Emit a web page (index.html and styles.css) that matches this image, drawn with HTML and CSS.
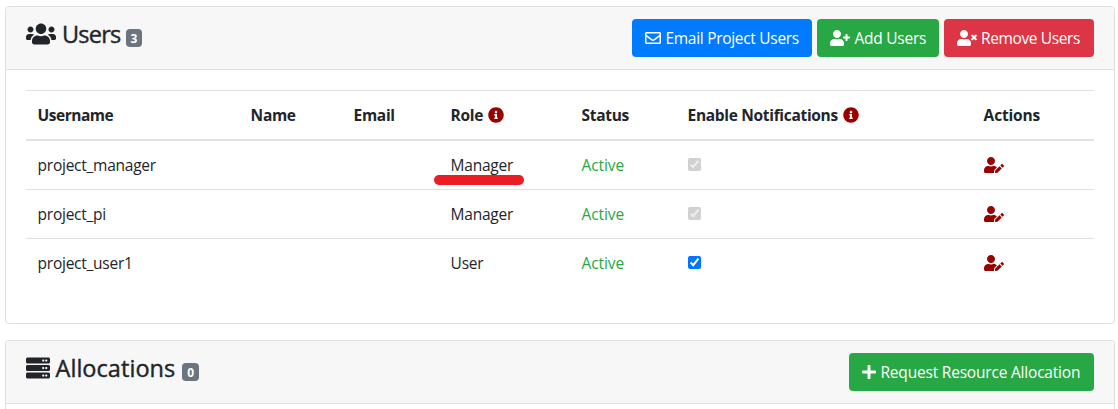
FILE: index.html
```html
<!DOCTYPE html>
<html lang="en">
<head>
<meta charset="utf-8">
<title>Project Users</title>
<link rel="stylesheet" href="styles.css">
</head>
<body>
<svg class="sprite" aria-hidden="true">
  <symbol id="users" viewBox="0 0 640 512"><path d="M96 224c35.3 0 64-28.7 64-64s-28.7-64-64-64-64 28.7-64 64 28.7 64 64 64zm448 0c35.3 0 64-28.7 64-64s-28.7-64-64-64-64 28.7-64 64 28.7 64 64 64zm32 32h-64c-17.6 0-33.5 7.1-45.1 18.6 40.3 22.1 68.9 62 75.1 109.4h66c17.7 0 32-14.3 32-32v-32c0-35.3-28.7-64-64-64zm-256 0c61.9 0 112-50.1 112-112S381.9 32 320 32 208 82.1 208 144s50.1 112 112 112zm76.8 32h-8.3c-20.8 10-43.9 16-68.5 16s-47.6-6-68.5-16h-8.3C179.6 288 128 339.6 128 403.2V432c0 26.5 21.5 48 48 48h288c26.5 0 48-21.5 48-48v-28.8c0-63.6-51.6-115.2-115.2-115.2zm-223.7-13.4C161.5 263.1 145.6 256 128 256H64c-35.3 0-64 28.7-64 64v32c0 17.7 14.3 32 32 32h65.9c6.3-47.4 34.9-87.3 75.2-109.4z"/></symbol>
  <symbol id="user-plus" viewBox="0 0 640 512"><path d="M624 208h-64v-64c0-8.800-7.200-16-16-16h-32c-8.800 0-16 7.200-16 16v64h-64c-8.800 0-16 7.200-16 16v32c0 8.800 7.200 16 16 16h64v64c0 8.800 7.200 16 16 16h32c8.800 0 16-7.200 16-16v-64h64c8.800 0 16-7.200 16-16v-32c0-8.800-7.200-16-16-16zm-400 48c70.700 0 128-57.300 128-128S294.700 0 224 0 96 57.300 96 128s57.300 128 128 128zm89.600 32h-16.700c-22.200 10.200-46.900 16-72.900 16s-50.600-5.800-72.900-16h-16.700C60.200 288 0 348.200 0 422.400V464c0 26.500 21.500 48 48 48h352c26.500 0 48-21.500 48-48v-41.600c0-74.200-60.200-134.400-134.400-134.400z"/></symbol>
  <symbol id="user-times" viewBox="0 0 640 512"><path d="M589.6 240l45.6-45.6c6.3-6.3 6.3-16.5 0-22.8l-22.8-22.8c-6.3-6.3-16.5-6.3-22.8 0L544 194.400l-45.600-45.600c-6.300-6.300-16.500-6.300-22.800 0l-22.800 22.800c-6.300 6.300-6.300 16.500 0 22.800l45.600 45.600-45.600 45.600c-6.300 6.300-6.300 16.500 0 22.800l22.800 22.800c6.300 6.300 16.500 6.300 22.800 0l45.600-45.600 45.600 45.600c6.300 6.300 16.500 6.300 22.800 0l22.800-22.800c6.300-6.300 6.300-16.500 0-22.800L589.600 240zM224 256c70.700 0 128-57.300 128-128S294.700 0 224 0 96 57.300 96 128s57.300 128 128 128zm89.600 32h-16.700c-22.200 10.200-46.900 16-72.900 16s-50.600-5.800-72.900-16h-16.700C60.200 288 0 348.200 0 422.400V464c0 26.500 21.500 48 48 48h352c26.500 0 48-21.500 48-48v-41.600c0-74.200-60.200-134.400-134.400-134.400z"/></symbol>
  <symbol id="user-edit" viewBox="0 0 640 512"><path d="M224 256c70.700 0 128-57.300 128-128S294.700 0 224 0 96 57.300 96 128s57.300 128 128 128zm89.600 32h-16.700c-22.200 10.200-46.900 16-72.900 16s-50.600-5.800-72.900-16h-16.700C60.200 288 0 348.200 0 422.400V464c0 26.500 21.500 48 48 48h274.900c-2.400-6.800-3.400-14-2.600-21.300l6.800-60.900 1.200-11.100 7.900-7.900 77.300-77.300c-24.500-27.700-60-45.500-99.900-45.500zm45.300 145.300l-6.800 61c-1.100 10.200 7.500 18.800 17.600 17.600l60.900-6.800 137.900-137.900-71.700-71.700-137.900 137.800zM633 268.900L595.100 231c-9.300-9.300-24.500-9.300-33.800 0l-37.800 37.800-4.100 4.100 71.800 71.700 41.800-41.800c9.300-9.400 9.300-24.500 0-33.900z"/></symbol>
  <symbol id="server" viewBox="0 0 512 512"><path id="unit" d="M480 160H32c-17.700 0-32-14.300-32-32V64c0-17.700 14.300-32 32-32h448c17.700 0 32 14.300 32 32v64c0 17.700-14.300 32-32 32zm-48-88c-13.300 0-24 10.700-24 24s10.700 24 24 24 24-10.700 24-24-10.700-24-24-24zm-64 0c-13.300 0-24 10.700-24 24s10.700 24 24 24 24-10.700 24-24-10.700-24-24-24z"/><use href="#unit" y="160"/><use href="#unit" y="320"/></symbol>
  <symbol id="info" viewBox="0 0 512 512"><path d="M256 8C119 8 8 119.100 8 256c0 137 111 248 248 248s248-111 248-248C504 119.100 393 8 256 8zm0 110c23.200 0 42 18.800 42 42s-18.800 42-42 42-42-18.800-42-42 18.800-42 42-42zm56 254c0 6.600-5.400 12-12 12h-88c-6.600 0-12-5.400-12-12v-24c0-6.600 5.400-12 12-12h12v-64h-12c-6.600 0-12-5.400-12-12v-24c0-6.600 5.400-12 12-12h64c6.600 0 12 5.400 12 12v100h12c6.600 0 12 5.400 12 12v24z"/></symbol>
  <symbol id="envelope" viewBox="0 0 512 512"><path d="M464 64H48C21.500 64 0 85.500 0 112v288c0 26.500 21.500 48 48 48h416c26.500 0 48-21.500 48-48V112c0-26.500-21.500-48-48-48zm0 48v40.800c-22.400 18.300-58.200 46.700-134.600 106.500-16.800 13.200-50.200 45.100-73.400 44.700-23.200.4-56.600-31.500-73.400-44.700C106.200 199.500 70.400 171.100 48 152.800V112h416zM48 400V214.400c22.900 18.300 55.400 43.900 104.900 82.600 21.900 17.200 60.200 55.200 103.100 55 42.700.2 80.500-37.200 103.100-55 49.500-38.700 82-64.400 104.900-82.600V400H48z"/></symbol>
  <symbol id="plus" viewBox="0 0 448 512"><path d="M416 208H272V64c0-17.700-14.300-32-32-32h-32c-17.700 0-32 14.300-32 32v144H32c-17.700 0-32 14.300-32 32v32c0 17.700 14.300 32 32 32h144v144c0 17.700 14.300 32 32 32h32c17.700 0 32-14.300 32-32V304h144c17.700 0 32-14.300 32-32v-32c0-17.700-14.300-32-32-32z"/></symbol>
</svg>

<section class="card">
  <header class="card-header">
    <h3 class="title"><svg class="icon icon-users"><use href="#users"/></svg><span class="title-text title-users">Users</span><span class="badge">3</span></h3>
    <div class="actions">
      <a class="btn btn-primary btn-email"><svg class="icon icon-md"><use href="#envelope"/></svg><span>Email Project Users</span></a>
      <a class="btn btn-success btn-add"><svg class="icon icon-wide"><use href="#user-plus"/></svg><span>Add Users</span></a>
      <a class="btn btn-danger btn-remove"><svg class="icon icon-wide"><use href="#user-times"/></svg><span>Remove Users</span></a>
    </div>
  </header>
  <div class="card-body">
    <table class="table">
      <colgroup><col class="c-username"><col class="c-name"><col class="c-email"><col class="c-role"><col class="c-status"><col class="c-notify"><col class="c-actions"></colgroup>
      <thead>
        <tr><th class="th-username">Username</th><th>Name</th><th>Email</th><th><span class="with-icon">Role<svg class="icon icon-md red"><use href="#info"/></svg></span></th><th>Status</th><th><span class="with-icon">Enable Notifications<svg class="icon icon-md red"><use href="#info"/></svg></span></th><th class="th-actions">Actions</th></tr>
      </thead>
      <tbody>
        <tr><td>project_manager</td><td></td><td></td><td><span class="marked">Manager</span></td><td class="active">Active</td><td><input class="check" type="checkbox" checked disabled></td><td><svg class="icon icon-wide red"><use href="#user-edit"/></svg></td></tr>
        <tr><td>project_pi</td><td></td><td></td><td>Manager</td><td class="active">Active</td><td><input class="check" type="checkbox" checked disabled></td><td><svg class="icon icon-wide red"><use href="#user-edit"/></svg></td></tr>
        <tr><td>project_user1</td><td></td><td></td><td>User</td><td class="active">Active</td><td><input class="check" type="checkbox" checked></td><td><svg class="icon icon-wide red"><use href="#user-edit"/></svg></td></tr>
      </tbody>
    </table>
  </div>
</section>

<section class="card card-last">
  <header class="card-header">
    <h3 class="title"><svg class="icon icon-server"><use href="#server"/></svg><span class="title-text title-allocations">Allocations</span><span class="badge badge-zero">0</span></h3>
    <div class="actions">
      <a class="btn btn-success btn-request"><svg class="icon icon-plus"><use href="#plus"/></svg><span>Request Resource Allocation</span></a>
    </div>
  </header>
</section>
</body>
</html>
```
FILE: styles.css
```css
* { box-sizing: border-box; }
body {
  margin: 0;
  padding: 6px 3px 0 5px;
  height: 409px;
  overflow: hidden;
  background: #fff;
  color: #212529;
  font: 15.5px/24px "Open Sans", "Noto Sans", sans-serif;
}
.sprite { position: absolute; width: 0; height: 0; }
.icon { display: block; flex: none; fill: currentColor; height: 16px; }
.icon-md { width: 16px; }
.icon-wide { width: 20px; }
.icon-plus { width: 14px; }
.icon-users { width: 30px; height: 24px; }
.icon-server { width: 24px; height: 24px; }
.red { color: #990000; }

.card {
  border: 1px solid #dfdfdf;
  border-radius: 4px;
  margin-bottom: 16px;
}
.card-last {
  height: 69px;
  margin-bottom: 0;
  border-bottom: 0;
  border-radius: 4px 4px 0 0;
}
.card-header {
  display: flex;
  justify-content: space-between;
  align-items: flex-start;
  height: 63px;
  padding: 12px 20px 12px 19.5px;
  background: #f7f7f7;
  border-bottom: 1px solid #dfdfdf;
  border-radius: 3px 3px 0 0;
}
.title {
  display: flex;
  align-items: center;
  margin: 0;
  height: 30px;
  font-size: 23.5px;
  font-weight: 500;
  line-height: 30px;
}
.title-text { -webkit-text-stroke: 0.4px currentColor; }
.title-users { margin: 0 5.5px 0 6.5px; letter-spacing: -0.8px; }
.title-allocations { margin: 0 7px 0 6px; letter-spacing: 0.05px; }
.badge {
  display: block;
  margin-top: 8px;
  width: 16px;
  height: 18px;
  border-radius: 4px;
  background: #6c757d;
  color: #fff;
  font-size: 12px;
  font-weight: 700;
  line-height: 19px;
  text-align: center;
}
.badge-zero { width: 17px; }
.actions { display: flex; gap: 5px; }
.btn {
  display: flex;
  align-items: center;
  gap: 4.5px;
  height: 38px;
  padding: 0 0 0 13px;
  border-radius: 4px;
  color: #fff;
  white-space: nowrap;
}
.btn-primary { background: #007bff; }
.btn-success { background: #28a745; }
.btn-danger { background: #dc3545; }
.btn-email { width: 180px; letter-spacing: -0.3px; }
.btn-add { width: 122px; letter-spacing: -0.25px; }
.btn-remove { width: 150px; padding-left: 12.5px; letter-spacing: -0.37px; }
.btn-request { width: 245px; letter-spacing: -0.2px; }

.card-body { padding: 20px; height: 253px; }
.table {
  width: 1068px;
  table-layout: fixed;
  border-collapse: separate;
  border-spacing: 0;
}
.c-username { width: 213px; }
.c-name { width: 103px; }
.c-email { width: 97px; }
.c-role { width: 131px; }
.c-status { width: 106px; }
.c-notify { width: 296px; }
.c-actions { width: 122px; }
th, td {
  height: 49px;
  padding: 0 11.6px;
  border-top: 1px solid #dee2e6;
  text-align: left;
  vertical-align: middle;
  white-space: nowrap;
  letter-spacing: -0.25px;
}
th {
  height: 51px;
  border-bottom: 2px solid #dee2e6;
  font-weight: 700;
  letter-spacing: -0.32px;
}
.th-username { letter-spacing: -0.5px; }
.th-actions { letter-spacing: -0.15px; }
tbody tr:first-child td { height: 48px; border-top: 0; }
.with-icon { display: flex; align-items: center; gap: 5px; }
.active { color: #28a745; letter-spacing: -0.1px; }
.check { display: block; margin: 0 0 2px; width: 13px; height: 13px; }
.marked { position: relative; }
.marked::after {
  content: "";
  position: absolute;
  left: -17px;
  top: 21px;
  width: 90px;
  height: 10px;
  border-radius: 5px;
  background: #ec1c24;
}
```
